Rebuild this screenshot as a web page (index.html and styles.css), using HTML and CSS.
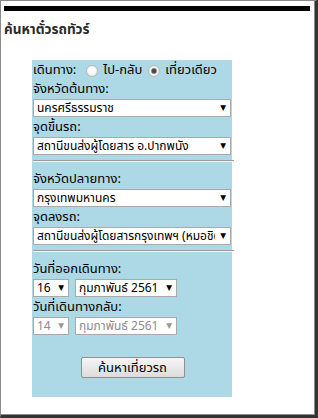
FILE: index.html
```html
<!DOCTYPE html>
<html lang="th">
<head>
    <meta charset="UTF-8">
    <meta name="viewport" content="width=device-width, initial-scale=1.0">
    <title>ค้นหาตั๋วรถทัวร์</title>
    <link rel="stylesheet" href="styles.css">
</head>
<body>
    <div class="frame">
        <!-- Top bar -->
        <div class="bar"></div>
        <h2 class="title">ค้นหาตั๋วรถทัวร์</h2>

        <!-- Search form -->
        <form class="panel">
            <div class="trip">
                <span>เดินทาง:</span>
                <label><input type="radio" name="trip" value="round"> ไป-กลับ</label>
                <label><input type="radio" name="trip" value="oneway" checked> เที่ยวเดียว</label>
            </div>

            <label class="field" for="fromProv">จังหวัดต้นทาง:</label>
            <span class="pick wide">
                <select id="fromProv">
                    <option>นครศรีธรรมราช</option>
                </select>
            </span>
            <label class="field" for="fromStop">จุดขึ้นรถ:</label>
            <span class="pick wide">
                <select id="fromStop">
                    <option>สถานีขนส่งผู้โดยสาร อ.ปากพนัง</option>
                </select>
            </span>

            <hr>

            <label class="field" for="toProv">จังหวัดปลายทาง:</label>
            <span class="pick wide">
                <select id="toProv">
                    <option>กรุงเทพมหานคร</option>
                </select>
            </span>
            <label class="field" for="toStop">จุดลงรถ:</label>
            <span class="pick wide">
                <select id="toStop">
                    <option>สถานีขนส่งผู้โดยสารกรุงเทพฯ (หมอชิต 2)</option>
                </select>
            </span>

            <hr>

            <label class="field" for="goDay">วันที่ออกเดินทาง:</label>
            <div class="dates">
                <span class="pick day">
                    <select id="goDay"><option>16</option></select>
                </span>
                <span class="pick month">
                    <select id="goMonth"><option>กุมภาพันธ์ 2561</option></select>
                </span>
            </div>
            <label class="field" for="backDay">วันที่เดินทางกลับ:</label>
            <div class="dates">
                <span class="pick day off">
                    <select id="backDay" disabled><option>14</option></select>
                </span>
                <span class="pick month off">
                    <select id="backMonth" disabled><option>กุมภาพันธ์ 2561</option></select>
                </span>
            </div>

            <div class="actions">
                <button type="button">ค้นหาเที่ยวรถ</button>
            </div>
        </form>
    </div>
</body>
</html>
```

FILE: styles.css
```css
body {
    margin: 0;
    font-family: Tahoma, "Noto Sans Thai", Loma, Garuda, "Noto Sans", sans-serif;
    font-size: 13px;
    color: #000;
}
.frame {
    box-sizing: border-box;
    width: 318px;
    height: 418px;
    border-left: 1px solid #8a8a8a;
    border-top: 1px solid #8a8a8a;
    border-right: 3px solid #333;
    border-bottom: 3px solid #333;
    box-shadow: inset -1px -1px 0 #8a8a8a;
    background: #fff;
}
.bar {
    height: 5px;
    margin: 5px 5px 0 3px;
    background: #000;
}
.title {
    margin: 9px 0 0 3px;
    height: 20px;
    line-height: 20px;
    font-size: 13.5px;
    font-weight: bold;
    color: #2a2a2a;
}
.panel {
    width: 200px;
    height: 337px;
    margin: 20px 0 0 31px;
    padding: 2px 0 0 1px;
    box-sizing: border-box;
    background: #add8e6;
}
.trip {
    display: flex;
    align-items: center;
    height: 17px;
    line-height: 17px;
}
.trip label {
    display: flex;
    align-items: center;
    margin-left: 10px;
}
.trip label + label {
    margin-left: 6px;
}
input[type="radio"] {
    appearance: none;
    width: 12px;
    height: 12px;
    margin: 0 5px 0 0;
    border: 1px solid #b8b8b8;
    border-radius: 50%;
    background: radial-gradient(circle at 50% 40%, #fff 30%, #e2e2e2 100%);
}
input[type="radio"]:checked {
    background: radial-gradient(circle, #4a4a4a 0 2px, #9a9a9a 2.6px, #f4f4f4 3.6px, #e2e2e2 100%);
}
.field {
    display: block;
    height: 20px;
    line-height: 20px;
}
.pick {
    position: relative;
    display: inline-block;
}
.pick::after {
    content: "▼";
    position: absolute;
    right: 5px;
    top: 3px;
    font-family: "DejaVu Sans", sans-serif;
    font-size: 7.5px;
    line-height: 12px;
    color: #000;
    pointer-events: none;
}
.pick.off::after {
    color: #999;
}
.wide {
    display: block;
    width: 198px;
}
select {
    appearance: none;
    display: block;
    box-sizing: border-box;
    width: 100%;
    height: 18px;
    padding: 0 15px 0 3px;
    border: 1px solid #a9a9a9;
    border-radius: 0;
    background: #fff;
    font-family: inherit;
    font-size: 12px;
    line-height: 16px;
    color: #000;
}
select:disabled {
    color: #8c8c8c;
    opacity: 1;
}
hr {
    margin: 5px -2px 0 0;
    border: 0;
    border-top: 1px solid #9c9c9c;
    border-bottom: 1px solid #eef4f6;
    height: 0;
}
hr + .field {
    margin-top: 7px;
}
.dates {
    display: flex;
    gap: 6px;
}
.day {
    width: 36px;
}
.month {
    width: 102px;
}
.actions {
    display: flex;
    justify-content: center;
    margin-top: 22px;
}
button {
    width: 104px;
    height: 21px;
    padding: 0;
    border: 1px solid #8f8f8f;
    border-radius: 2px;
    background: linear-gradient(#f6f6f6, #dcdcdc);
    font-family: inherit;
    font-size: 13px;
    color: #000;
}
```
